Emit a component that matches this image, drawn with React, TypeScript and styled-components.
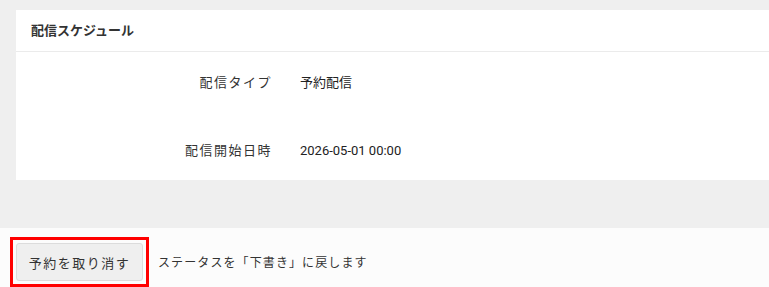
import styled, { createGlobalStyle } from "styled-components";

const GlobalStyle = createGlobalStyle`
  html, body {
    margin: 0;
    padding: 0;
    background: #efefef;
  }
  body {
    font-family: Roboto, "Noto Sans CJK JP", sans-serif;
    color: #333;
  }
`;

type Item = { label: string; value: string };

const items: Item[] = [
  { label: "配信タイプ", value: "予約配信" },
  { label: "配信開始日時", value: "2026-05-01 00:00" },
];

const App = (): JSX.Element => {
  return (
    <>
      <GlobalStyle />
      <Page>
        <Main>
          <Card>
            <CardHeader>配信スケジュール</CardHeader>
            <CardBody>
              {items.map((item) => (
                <Row key={item.label}>
                  <Label>{item.label}</Label>
                  <Value>{item.value}</Value>
                </Row>
              ))}
            </CardBody>
          </Card>
        </Main>
        <Footer>
          <Highlight>
            <CancelButton type="button">予約を取り消す</CancelButton>
          </Highlight>
          <Note>ステータスを「下書き」に戻します</Note>
        </Footer>
      </Page>
    </>
  );
};

export default App;

const Page = styled.div`
  display: flex;
  flex-direction: column;
  min-height: 287px;
`;

const Main = styled.div`
  padding: 10px 0 48px 16px;
`;

const Card = styled.section`
  background: #fff;
`;

const CardHeader = styled.h3`
  margin: 0;
  height: 41px;
  line-height: 42px;
  padding: 0 15px;
  font-size: 13px;
  font-weight: bold;
  color: #333;
  border-bottom: 1px solid #ebebeb;
`;

const CardBody = styled.div`
  display: grid;
  row-gap: 48px;
  padding: 21px 0 19px;
`;

const Row = styled.div`
  display: grid;
  grid-template-columns: 256px 1fr;
  column-gap: 28px;
  line-height: 20px;
`;

const Label = styled.div`
  text-align: right;
  font-size: 13px;
  letter-spacing: 1.5px;
  color: #333;
`;

const Value = styled.div`
  font-size: 13px;
  color: #222;
`;

const Footer = styled.div`
  flex: 1;
  display: flex;
  align-items: flex-start;
  gap: 9px;
  padding: 9px 10px;
  background: #fcfcfc;
`;

const Highlight = styled.div`
  display: flex;
  padding: 3px;
  border: 3px solid #ff0000;
`;

const CancelButton = styled.button`
  width: 127px;
  height: 38px;
  padding: 0;
  background: #efefef;
  border: 1px solid #dcdcdc;
  border-radius: 3px;
  font-family: inherit;
  font-size: 13px;
  letter-spacing: 1.5px;
  color: #333;
  cursor: pointer;
`;

const Note = styled.span`
  margin-top: 18px;
  font-size: 12px;
  line-height: 16px;
  letter-spacing: 1.1px;
  color: #333;
`;
